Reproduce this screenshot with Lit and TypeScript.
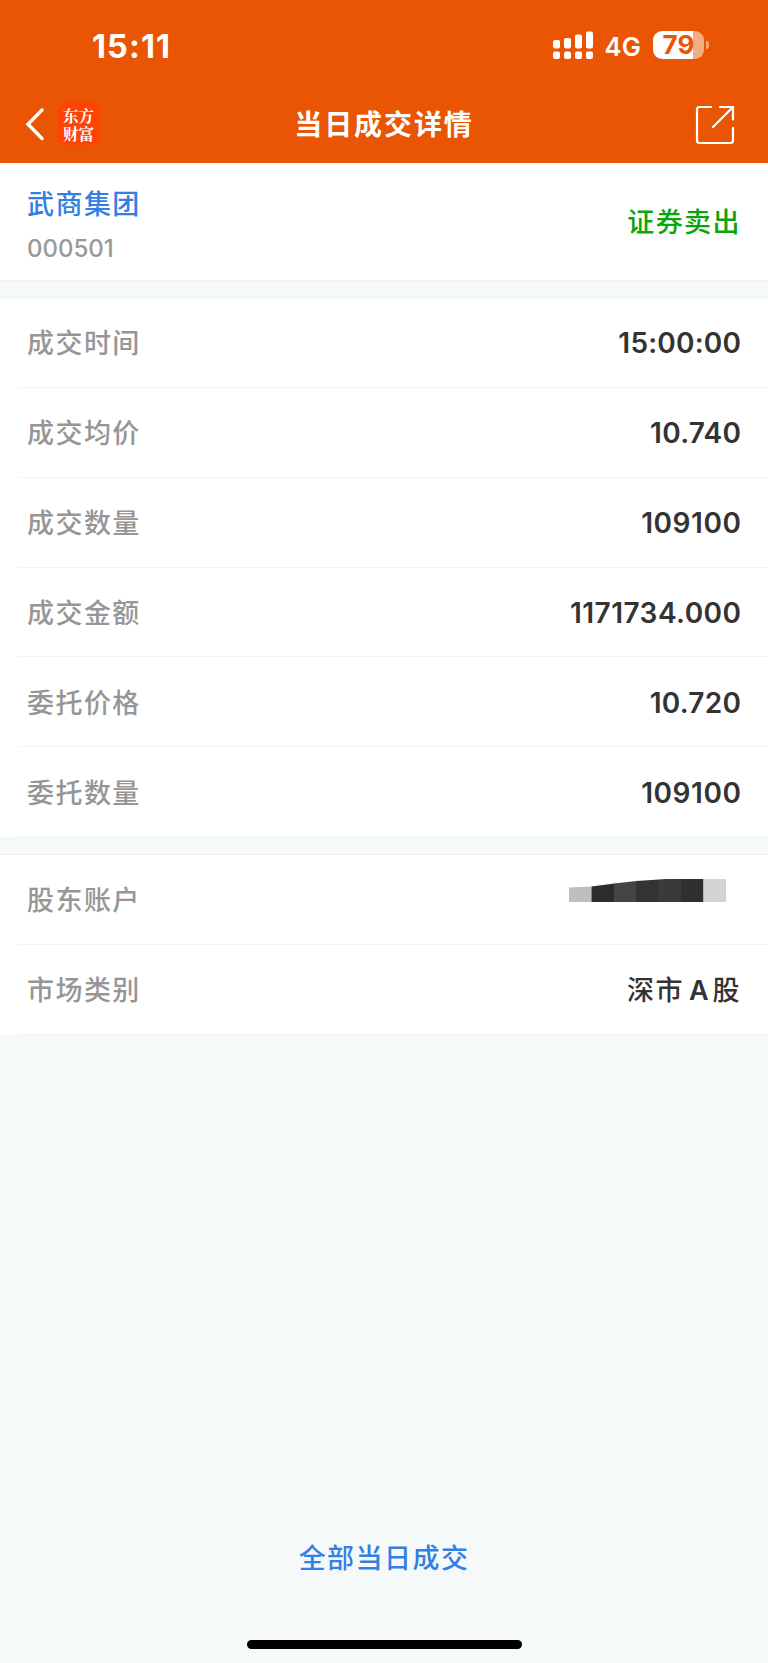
import { LitElement, html, css, svg } from "lit";
import { customElement, property } from "lit/decorators.js";

@customElement("status-bar")
class StatusBar extends LitElement {
  static styles = css`
    :host { display: flex; height: 92px; padding: 0 59px 0 92px; box-sizing: border-box; justify-content: space-between; color: #fff; font-family: Inter, "Noto Sans CJK SC", sans-serif; }
    .time { font-size: 32.5px; font-weight: 750; line-height: 40px; margin-top: 26.5px; letter-spacing: 1.1px; }
    .right { display: flex; margin-top: 31px; height: 28px; }
    .signal { width: 40px; height: 28px; margin-right: 12px; flex: none; }
    .net { width: 48.5px; font-size: 25.5px; font-weight: 600; line-height: 31.5px; letter-spacing: 0.3px; }
    .battery { display: flex; align-items: center; height: 28px; }
    .cell { width: 51px; height: 28px; border-radius: 9px; background: linear-gradient(90deg, #fff 40px, #f5ac82 40px); color: #ea5504; font-size: 26px; font-weight: 750; line-height: 28px; text-align: center; }
    .tip { width: 3px; height: 8px; margin-left: 2px; border-radius: 0 4px 4px 0; background: #f5ac82; }
  `;
  render() {
    return html`
      <div class="time">15:11</div>
      <div class="right">
        <svg class="signal" viewBox="0 0 40 28" fill="#fff">
          ${[[0, 9], [11, 7], [22, 3.5], [33, 0.5]].map(
            ([x, y]) => svg`<rect x=${x} y=${y} width="7" height=${17.5 - y} rx="2"/><rect x=${x} y="20.5" width="7" height="7.5" rx="2"/>`
          )}
        </svg>
        <div class="net">4G</div>
        <div class="battery"><div class="cell">79</div><div class="tip"></div></div>
      </div>`;
  }
}

@customElement("nav-bar")
class NavBar extends LitElement {
  static styles = css`
    :host { display: grid; grid-template-columns: 1fr auto 1fr; height: 71px; box-sizing: border-box; color: #fff; }
    .left { display: flex; }
    .back { width: 20px; height: 34px; margin: 15px 0 0 25px; }
    .logo { width: 41px; height: 43px; margin: 10px 0 0 13px; padding-top: 3.5px; box-sizing: border-box; border-radius: 9px; background: #ff4305; font: 700 15.5px/18px "Noto Serif CJK SC", "Noto Sans CJK SC", serif; text-align: center; }
    .line { display: block; height: 18px; }
    .title { font: 700 28px/40px "Noto Sans CJK SC", sans-serif; letter-spacing: 1.9px; margin: 11px 0 0; }
    .share { width: 40px; height: 40px; margin: 13px 33px 0 auto; }
  `;
  render() {
    return html`
      <div class="left">
        <svg class="back" viewBox="0 0 20 34" fill="none" stroke="#fff" stroke-width="3.4"><path d="M17 3 3 17.300 17 31.500" stroke-linecap="round"/></svg>
        <div class="logo"><span class="line">东方</span><span class="line">财富</span></div>
      </div>
      <div class="title">当日成交详情</div>
      <svg class="share" viewBox="0 0 40 40" fill="none" stroke="#fff" stroke-width="2.2" stroke-linecap="round">
        <path d="M16 2H4.500Q2 2 2 4.500V35.500Q2 38 4.500 38H35.500Q38 38 38 35.500V23"/>
        <path d="M25 2H38V14.500M37 3 18 22"/>
      </svg>`;
  }
}

@customElement("detail-row")
class DetailRow extends LitElement {
  @property() label = "";
  @property() value = "";
  @property({ type: Boolean }) masked = false;
  static styles = css`
    :host { display: flex; height: 89.85px; box-sizing: border-box; padding: 0 27px; justify-content: space-between; align-items: center; background: linear-gradient(#f3f4f5, #f3f4f5) 18px 100% / 100% 1px no-repeat; }
    .label { font: 450 27px/40px "Noto Sans CJK SC", sans-serif; letter-spacing: 1.45px; color: #969696; margin-bottom: 1px; }
    .value { font: 600 28px/40px Inter, "Noto Sans CJK SC", sans-serif; color: #333; margin-top: 1px; }
    .cjk { font: 500 27px/40px "Noto Sans CJK SC", sans-serif; letter-spacing: 1.45px; margin: 0; }
    .latin { font-family: Inter, sans-serif; font-weight: 600; margin: 0 4px 0 5px; letter-spacing: 0; }
    .mask { width: 157px; height: 24px; margin: 0 15px 20px 0; }
  `;
  render() {
    return html`
      <span class="label">${this.label}</span>
      ${this.masked
        ? html`<svg class="mask" viewBox="0 0 157 24">
            <path fill="#333" d="M23 10 45 6.500 67 4 90 2.500H134V23.500H23z"/>
            <path fill="#bebebe" d="M0 9.500 22.500 8.500V24H0z"/>
            <path fill="#2c2c2c" d="M22.500 8.500 45.500 5.500V24H22.500z"/>
            <path fill="#444" d="M45 5.500 67.500 3V24H45z"/>
            <path fill="#333" d="M67 3 90 1.500V24H67z"/>
            <path fill="#3a3a3a" d="M89.500 1.500 97 1H112.500V24H89.500z"/>
            <path fill="#303030" d="M112 1H134.500V24H112z"/>
            <path fill="#d4d4d4" d="M134.500 1H157V24H134.500z"/>
          </svg>`
        : this.valueText()}`;
  }
  valueText() {
    if (/[^\x00-\x7f]/.test(this.value)) {
      return html`<span class="value cjk">${this.value
        .split(/([A-Z]+)/)
        .map((s) => (/^[A-Z]+$/.test(s) ? html`<span class="latin">${s}</span>` : s))}</span>`;
    }
    const ones = this.value.split("1").length - 1;
    const gap = ((ones * 1.7) / this.value.length).toFixed(2);
    return html`<span class="value" style="letter-spacing:${gap}px;margin-right:-${gap}px">${this.value}</span>`;
  }
}

@customElement("app-root")
class AppRoot extends LitElement {
  static styles = css`
    :host { display: flex; flex-direction: column; height: 1663px; background: #f5f9fa; font-family: "Noto Sans CJK SC", sans-serif; }
    .head { background: #ea5504; height: 163px; }
    .card { background: #fff; }
    .stock { display: flex; justify-content: space-between; height: 118px; padding: 0 27px; box-sizing: border-box; border-bottom: 1px solid #eff1f2; }
    .name { font: 500 27px/40px "Noto Sans CJK SC", sans-serif; letter-spacing: 1.45px; color: #3280e4; margin-top: 20px; }
    .code { font: 500 24px/30px Inter, sans-serif; color: #999; margin-top: 11px; }
    .side { font: 500 27px/40px "Noto Sans CJK SC", sans-serif; letter-spacing: 1.45px; color: #0ba50b; margin-top: 38px; }
    .group { margin-top: 17px; border-top: 1px solid #eff1f2; }
    .stock + .group { margin-top: 16px; }
    .foot { margin-top: auto; display: flex; flex-direction: column; align-items: center; }
    .all { font: 500 27px/40px "Noto Sans CJK SC", sans-serif; letter-spacing: 1.45px; color: #3280e4; }
    .home { width: 275px; height: 9px; border-radius: 5px; background: #000; margin: 63px 0 14.500px; }
  `;
  render() {
    const trade = [
      ["成交时间", "15:00:00"],
      ["成交均价", "10.740"],
      ["成交数量", "109100"],
      ["成交金额", "1171734.000"],
      ["委托价格", "10.720"],
      ["委托数量", "109100"],
    ];
    return html`
      <header class="head"><status-bar></status-bar><nav-bar></nav-bar></header>
      <section class="card stock">
        <div><div class="name">武商集团</div><div class="code">000501</div></div>
        <div class="side">证券卖出</div>
      </section>
      <section class="card group">
        ${trade.map(([l, v]) => html`<detail-row .label=${l} .value=${v}></detail-row>`)}
      </section>
      <section class="card group">
        <detail-row .label=${"股东账户"} .masked=${true}></detail-row>
        <detail-row .label=${"市场类别"} .value=${"深市A股"}></detail-row>
      </section>
      <footer class="foot"><div class="all">全部当日成交</div><div class="home"></div></footer>`;
  }
}
